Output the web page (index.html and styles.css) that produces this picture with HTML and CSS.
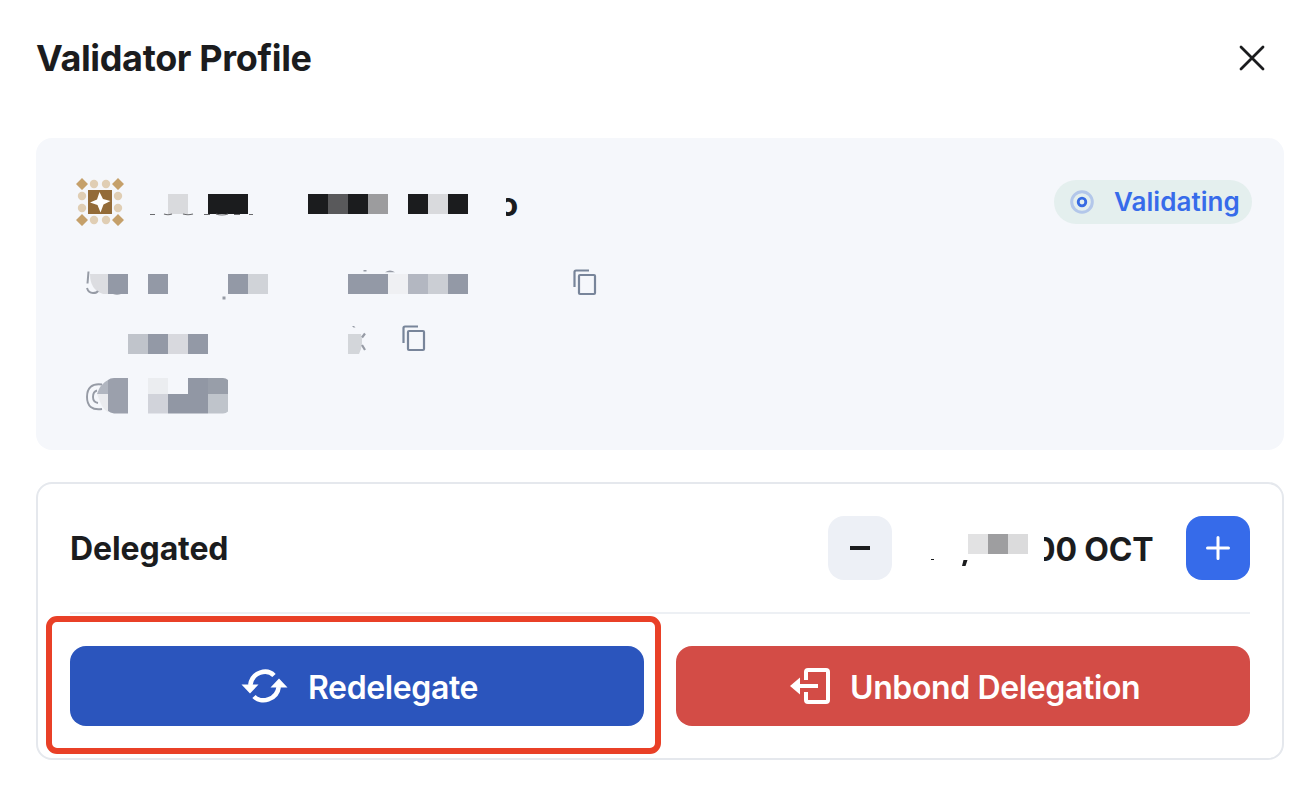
FILE: index.html
```html
<!DOCTYPE html>
<html lang="en">
<head>
<meta charset="utf-8">
<title>Validator Profile</title>
<link rel="stylesheet" href="styles.css">
</head>
<body>
<main class="modal">
  <header class="header">
    <h1 class="title"><span>Validator Profile</span></h1>
    <svg class="close" width="28" height="28" viewBox="0 0 28 28"><path d="M3 3 25 25M25 3 3 25"/></svg>
  </header>

  <section class="profile">
    <div class="identity">
      <svg width="48" height="48" viewBox="0 0 48 48">
        <path fill="#c5a06a" d="M6 0l6 6-6 6-6-6zM42 0l6 6-6 6-6-6zM6 36l6 6-6 6-6-6zM42 36l6 6-6 6-6-6z"/>
        <g fill="#e0ceb4"><circle cx="18" cy="6" r="4.2"/><circle cx="30" cy="6" r="4.2"/><circle cx="6" cy="18" r="4.2"/><circle cx="6" cy="30" r="4.2"/><circle cx="42" cy="18" r="4.2"/><circle cx="42" cy="30" r="4.2"/><circle cx="18" cy="42" r="4.2"/><circle cx="30" cy="42" r="4.2"/></g>
        <path fill="#936b38" d="M12 12h24v24H12z"/>
        <path fill="#fff" d="M23.500 14l3.500 7 7.500 2-7 3.500-3 8-3-7.500-7.500-2.500 7-3z"/>
      </svg>
      <svg class="masked-name" width="340" height="48" viewBox="0 0 340 48">
        <path fill="#d9dadd" d="M34 16h20v20H34zM294 16h20v20h-20z"/>
        <path fill="#1b1c1e" d="M74 16h40v20H74zM174 16h20v20h-20zM214 16h20v20h-20zM274 16h20v20h-20zM314 16h20v20h-20z"/>
        <path fill="#59595b" d="M194 16h20v20h-20z"/><path fill="#9c9c9e" d="M234 16h20v20h-20z"/>
        <path fill="none" stroke="#6a6b6e" stroke-width="1.200" d="M16 36.500h5M30 36q4 1.500 8 0M49 36q5 1.500 10 0M70 36.500h6M82 36q6 2 12 0M100 36.500h6M115 36.500h4"/>
      </svg>
      <span class="name-end">o</span>
      <div class="badge">
        <svg width="24" height="24" viewBox="0 0 24 24"><circle class="ring" cx="12" cy="12" r="10.300"/><circle class="core" cx="12" cy="12" r="3.800"/></svg>
        <span class="status">Validating</span>
      </div>
    </div>

    <div class="detail">
      <svg width="392" height="36" viewBox="0 0 392 36">
        <path fill="#dcdde1" d="M14 10h18v20h-5Q14 26 14 10z"/>
        <path fill="#9399a6" d="M32 10h20v20H32zM72 10h20v20H72zM152 10h20v20h-20zM272 10h40v20h-40zM372 10h20v20h-20z"/>
        <path fill="#d0d3d8" d="M172 10h20v20h-20z"/><path fill="#eff0f3" d="M312 10h20v20h-20z"/><path fill="#b3b7c1" d="M332 10h20v20h-20z"/><path fill="#cbced4" d="M352 10h20v20h-20z"/>
        <path fill="none" stroke="#969ba5" stroke-width="2" d="M12.500 7.500l-1 12M11 24q1.500 5 6 5 4 0 5-2"/>
        <path fill="#969ba5" d="M146.500 32.500h3v3h-3zM287.500 6h3v1.500h-3zM309 8.300q5-3.500 10 0zM37 30q4 1.500 8 0z"/>
      </svg>
      <svg class="copy" width="24" height="28" viewBox="0 0 24 28"><path d="M16 2.500H3q-1.500 0-1.500 1.500V19M7 7h14q1 0 1 1v17q0 1-1 1h-14q-1 0-1-1v-17q0-1 1-1z"/></svg>
    </div>

    <div class="detail short">
      <svg width="292" height="36" viewBox="0 0 292 36">
        <path fill="#c0c4cb" d="M52 14h20v20H52z"/><path fill="#9399a6" d="M72 14h20v20H72zM112 14h20v20h-20z"/><path fill="#d8d9de" d="M92 14h20v20H92z"/>
        <path fill="#d3d6da" d="M272 14h13q3 10-2 20h-11z"/>
        <path fill="none" stroke="#969ba5" stroke-width="2.200" d="M289 13.500l-3 4M286 25l3 5"/><path fill="#969ba5" d="M276 6h2l1.500 1.500h-2z"/>
      </svg>
      <svg class="copy" width="24" height="28" viewBox="0 0 24 28"><path d="M16 2.500H3q-1.500 0-1.500 1.500V19M7 7h14q1 0 1 1v17q0 1-1 1h-14q-1 0-1-1v-17q0-1 1-1z"/></svg>
    </div>

    <svg class="handle" width="154" height="40" viewBox="0 0 154 40">
      <path fill="none" stroke="#969ba5" stroke-width="1.900" d="M26 8.500C16 7 11 12 11 21s5 13.500 15 12M21 14.500q-4 1-4 6.500 0 5 5 6"/>
      <path fill="#b1b6c0" d="M32 4v14H21Q24 8 32 4z"/><path fill="#eaebee" d="M21 18h11v18q-5-3-7-8z"/>
      <path fill="#9ba0ac" d="M38 2h14v35.500H38q-4-1-6-2.500V4q2-2 6-2z"/>
      <path fill="#ebedf0" d="M72 2h20v16H72z"/><path fill="#d1d3da" d="M72 18h20v19.500H72z"/>
      <path fill="#9197a4" d="M112 2h20v35.500H92V18h20z"/><path fill="#989ea9" d="M132 2h15q3 0 5 2v14h-20z"/><path fill="#bfc4cb" d="M132 18h20v17.500q-2 2-5 2h-15z"/>
    </svg>
  </section>

  <section class="delegation">
    <div class="summary">
      <h2 class="label"><span>Delegated</span></h2>
      <div class="stepper">
        <button class="step minus" aria-label="Decrease"><svg width="24" height="24" viewBox="0 0 24 24"><path d="M2 12h20"/></svg></button>
        <svg class="masked-amount" width="114" height="48" viewBox="0 0 114 48">
          <path fill="#e2e2e3" d="M38 10h20v20H38z"/><path fill="#9e9ea0" d="M58 10h20v20H58z"/><path fill="#dbdbdc" d="M78 10h20v20H78z"/>
          <path fill="#1b1c1e" d="M1 35h3v1H1zM33.500 36h4l-2 6h-3.500z"/>
        </svg>
        <span class="amount">00 OCT</span>
        <button class="step plus" aria-label="Increase"><svg width="24" height="24" viewBox="0 0 24 24"><path d="M1.500 12h21M12 1.500v21"/></svg></button>
      </div>
    </div>
    <div class="actions">
      <button class="action redelegate">
        <svg width="48" height="36" viewBox="0 0 48 36"><path fill="none" stroke="#fff" stroke-width="4.600" d="M34 7.500C27 0 12 4 10.300 17M14 28.500C21 36 37 32 38.700 19"/><path fill="#fff" d="M1.500 16.500h17L10 25.500zM30.500 19.500h17L39 10.500z"/></svg>
        <span>Redelegate</span>
      </button>
      <button class="action unbond">
        <svg width="40" height="36" viewBox="0 0 40 36"><path fill="none" stroke="#fff" stroke-width="4" d="M16 12V4q0-2 2-2h18q2 0 2 2v28q0 2-2 2H18q-2 0-2-2v-8M8 18h20"/><path fill="#fff" d="M0 18l10-8.500v17z"/></svg>
        <span>Unbond Delegation</span>
      </button>
    </div>
    <div class="highlight"></div>
  </section>
</main>
</body>
</html>
```
FILE: styles.css
```css
* { box-sizing: border-box; }
body { margin: 0; background: #fff; color: #1b1c1e; font-family: Inter, "Liberation Sans", sans-serif; }
svg { display: block; flex: none; }
h1, h2 { margin: 0; }
button { border: 0; padding: 0; font: inherit; }
.modal { height: 792px; padding: 28px 26px 0 36px; }
.header { display: flex; justify-content: space-between; align-items: center; height: 60px; padding-right: 8px; }
.title { font-size: 36px; font-weight: 700; letter-spacing: -0.35px; line-height: 60px; }
.close { margin-right: 10px; fill: none; stroke: #1b1c1e; stroke-width: 2.8; stroke-linecap: round; }
.profile { height: 312px; margin-top: 50px; padding: 40px 32px 0 40px; border-radius: 16px; background: #f5f7fb; display: flex; flex-direction: column; }
.identity { display: flex; align-items: center; height: 48px; }
.masked-name { margin-left: 10px; }
.name-end { margin-left: 24px; padding-top: 3px; font-size: 33px; font-weight: 700; line-height: 48px; clip-path: inset(0 0 0 8px); }
.badge { display: flex; align-items: center; gap: 20px; width: 198px; height: 44px; margin-left: auto; padding-left: 16px; border-radius: 22px; background: #e4efee; color: #376bea; font-size: 26px; font-weight: 600; }
.status { padding-bottom: 2px; letter-spacing: 0.05px; }
.ring { fill: none; stroke: #b3c7ea; stroke-width: 3; }
.core { fill: none; stroke: #376be3; stroke-width: 2.8; }
.detail { display: flex; align-items: center; gap: 104.5px; height: 36px; margin-top: 38px; }
.short { gap: 33.5px; margin-top: 20px; }
.copy { fill: none; stroke: #78859a; stroke-width: 2.2; }
.handle { margin-top: 20px; }
.profile, .delegation { width: 1248px; }
.delegation { position: relative; height: 278px; margin-top: 32px; padding: 32px; border: 2px solid #e5e8ed; border-radius: 16px; }
.summary { display: flex; justify-content: space-between; height: 98px; border-bottom: 2px solid #edf0f4; }
.label { padding-top: 1px; font-size: 32px; font-weight: 700; letter-spacing: -0.1px; line-height: 64px; }
.stepper { display: flex; height: 64px; align-items: center; }
.step { display: grid; place-items: center; width: 64px; height: 64px; border-radius: 16px; fill: none; }
.minus { background: #edf0f6; stroke: #1b1c1e; stroke-width: 4; }
.plus { background: #366bea; stroke: #fff; stroke-width: 3; stroke-linecap: round; margin-left: 33px; }
.masked-amount { margin-left: 38px; }
.amount { width: 119px; margin-left: -10px; padding-top: 2px; font-size: 32px; font-weight: 700; letter-spacing: -0.15px; white-space: nowrap; clip-path: inset(0 -4px 0 10px); }
.actions { display: grid; grid-template-columns: 1fr 1fr; gap: 32px; margin-top: 32px; }
.action { display: flex; align-items: center; height: 80px; border-radius: 16px; color: #fff; font-size: 32px; font-weight: 600; letter-spacing: -0.38px; }
.action span { padding-top: 2px; }
.redelegate { gap: 20px; padding-left: 170px; background: #2b55bd; }
.unbond { gap: 20px; padding-left: 114px; background: #d34c46; }
.highlight { position: absolute; left: 8px; top: 132px; width: 615px; height: 138px; border: 6px solid #e94027; border-radius: 11px; pointer-events: none; }
```
